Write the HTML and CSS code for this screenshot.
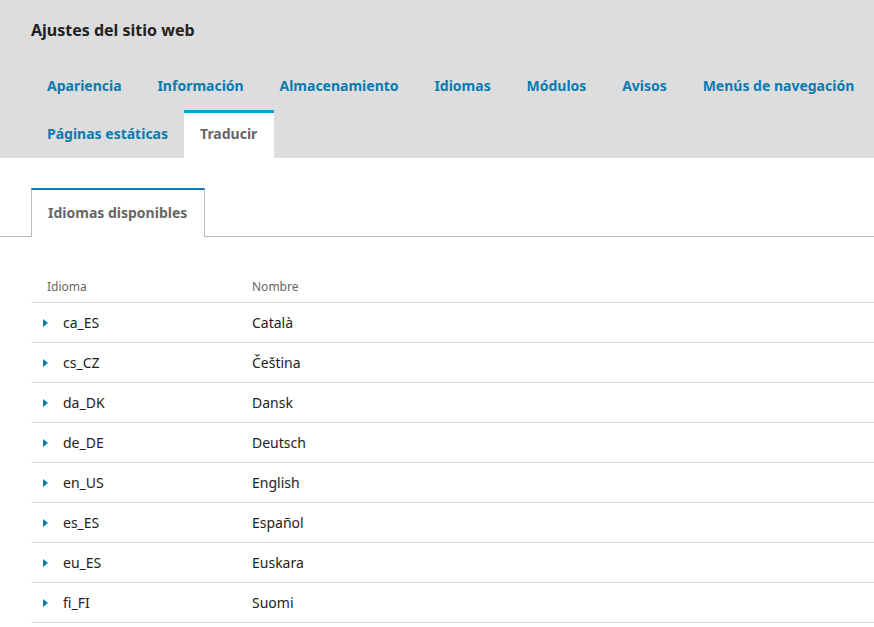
FILE: index.html
```html
<!DOCTYPE html>
<html lang="es">
<head>
<meta charset="utf-8">
<title>Ajustes del sitio web</title>
<link rel="stylesheet" href="styles.css">
</head>
<body>
<header class="head">
  <h1 class="title">Ajustes del sitio web</h1>
  <nav class="tabs">
    <a class="tab">Apariencia</a>
    <a class="tab">Información</a>
    <a class="tab">Almacenamiento</a>
    <a class="tab">Idiomas</a>
    <a class="tab">Módulos</a>
    <a class="tab">Avisos</a>
    <a class="tab">Menús de navegación</a>
    <a class="tab">Páginas estáticas</a>
    <a class="tab active">Traducir</a>
  </nav>
</header>
<main class="content">
  <div class="subtabs">
    <a class="subtab active">Idiomas disponibles</a>
  </div>
  <table class="grid">
    <thead>
      <tr><th class="c1">Idioma</th><th>Nombre</th></tr>
    </thead>
    <tbody>
      <tr><td class="c1"><span class="arrow"></span>ca_ES</td><td>Català</td></tr>
      <tr><td class="c1"><span class="arrow"></span>cs_CZ</td><td>Čeština</td></tr>
      <tr><td class="c1"><span class="arrow"></span>da_DK</td><td>Dansk</td></tr>
      <tr><td class="c1"><span class="arrow"></span>de_DE</td><td>Deutsch</td></tr>
      <tr><td class="c1"><span class="arrow"></span>en_US</td><td>English</td></tr>
      <tr><td class="c1"><span class="arrow"></span>es_ES</td><td>Español</td></tr>
      <tr><td class="c1"><span class="arrow"></span>eu_ES</td><td>Euskara</td></tr>
      <tr><td class="c1"><span class="arrow"></span>fi_FI</td><td>Suomi</td></tr>
    </tbody>
  </table>
</main>
</body>
</html>
```
FILE: styles.css
```css
html, body {
  margin: 0;
  padding: 0;
  background: #fff;
  font-family: "Noto Sans", "Open Sans", sans-serif;
  color: #222;
}
.head {
  background: #ddd;
  padding: 18px 0 0 31px;
}
.title {
  margin: 0;
  font-size: 16px;
  font-weight: 700;
  line-height: 24px;
  color: #222;
}
.tabs {
  display: flex;
  flex-wrap: wrap;
  column-gap: 3.8px;
  margin-top: 20px;
}
.tab {
  display: block;
  padding: 0 16px;
  height: 48px;
  line-height: 48px;
  font-size: 14px;
  font-weight: 700;
  color: #0a7bb1;
  box-sizing: border-box;
}
.tab.active {
  background: #fff;
  color: #666;
  border-top: 3px solid #0a9ee0;
  line-height: 42px;
  padding: 0 17px 0 16px;
  margin-left: -3.8px;
}
.content {
  padding-top: 30px;
}
.subtabs {
  display: flex;
  padding-left: 31px;
  border-bottom: 1px solid #bbb;
}
.subtab {
  display: block;
  height: 49px;
  box-sizing: border-box;
  padding: 0 17px 0 16px;
  line-height: 46px;
  font-size: 14px;
  font-weight: 700;
  color: #666;
  background: #fff;
  border: 1px solid #bbb;
  border-top: 2px solid #0a7bb1;
  border-bottom: none;
  margin-bottom: -1px;
}
.grid {
  margin: 30px 0 0 31px;
  width: calc(100% - 31px);
  border-collapse: collapse;
}
.grid th {
  text-align: left;
  font-size: 12px;
  font-weight: 400;
  color: #666;
  height: 32px;
  padding: 3px 0 0 0;
  vertical-align: middle;
  border-bottom: 1px solid #ddd;
}
.grid td {
  height: 39px;
  font-size: 14px;
  color: #222;
  padding: 0;
  border-bottom: 1px solid #ddd;
}
.grid .c1 {
  width: 205px;
  padding-left: 16px;
}
.grid td.c1 {
  padding-left: 12px;
}
.arrow {
  display: inline-block;
  width: 0;
  height: 0;
  border-top: 4px solid transparent;
  border-bottom: 4px solid transparent;
  border-left: 5px solid #0a7bb1;
  margin-right: 15px;
  vertical-align: 1px;
}
```
